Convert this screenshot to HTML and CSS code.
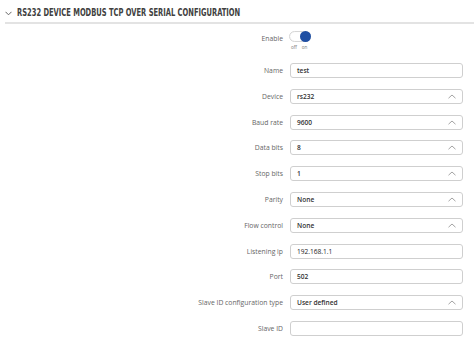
FILE: index.html
```html
<!DOCTYPE html>
<html>
<head>
<meta charset="utf-8">
<link rel="stylesheet" href="styles.css">
</head>
<body>
<div class="section">
  <div class="section-head">
    <svg class="chev" width="7" height="5" viewBox="0 0 7 5"><polyline points="0.5,0.8 3.5,3.8 6.5,0.8" fill="none" stroke="#666" stroke-width="1"/></svg>
    <span class="title">RS232 DEVICE MODBUS TCP OVER SERIAL CONFIGURATION</span>
  </div>
  <div class="form">
    <div class="row row-toggle">
      <label class="lbl">Enable</label>
      <div class="toggle-wrap">
        <div class="toggle"><span class="knob"></span></div>
        <div class="toggle-txt"><span>off</span><span>on</span></div>
      </div>
    </div>
    <div class="row"><label class="lbl">Name</label><div class="field">test</div></div>
    <div class="row"><label class="lbl">Device</label><div class="field select">rs232<svg class="caret" width="8" height="5" viewBox="0 0 8 5"><polyline points="0.5,4.2 4,1 7.5,4.2" fill="none" stroke="#999" stroke-width="0.9"/></svg></div></div>
    <div class="row"><label class="lbl">Baud rate</label><div class="field select">9600<svg class="caret" width="8" height="5" viewBox="0 0 8 5"><polyline points="0.5,4.2 4,1 7.5,4.2" fill="none" stroke="#999" stroke-width="0.9"/></svg></div></div>
    <div class="row"><label class="lbl">Data bits</label><div class="field select">8<svg class="caret" width="8" height="5" viewBox="0 0 8 5"><polyline points="0.5,4.2 4,1 7.5,4.2" fill="none" stroke="#999" stroke-width="0.9"/></svg></div></div>
    <div class="row"><label class="lbl">Stop bits</label><div class="field select">1<svg class="caret" width="8" height="5" viewBox="0 0 8 5"><polyline points="0.5,4.2 4,1 7.5,4.2" fill="none" stroke="#999" stroke-width="0.9"/></svg></div></div>
    <div class="row"><label class="lbl">Parity</label><div class="field select">None<svg class="caret" width="8" height="5" viewBox="0 0 8 5"><polyline points="0.5,4.2 4,1 7.5,4.2" fill="none" stroke="#999" stroke-width="0.9"/></svg></div></div>
    <div class="row"><label class="lbl">Flow control</label><div class="field select">None<svg class="caret" width="8" height="5" viewBox="0 0 8 5"><polyline points="0.5,4.2 4,1 7.5,4.2" fill="none" stroke="#999" stroke-width="0.9"/></svg></div></div>
    <div class="row"><label class="lbl">Listening ip</label><div class="field plain">192.168.1.1</div></div>
    <div class="row"><label class="lbl">Port</label><div class="field">502</div></div>
    <div class="row"><label class="lbl">Slave ID configuration type</label><div class="field select">User defined<svg class="caret" width="8" height="5" viewBox="0 0 8 5"><polyline points="0.5,4.2 4,1 7.5,4.2" fill="none" stroke="#999" stroke-width="0.9"/></svg></div></div>
    <div class="row"><label class="lbl">Slave ID</label><div class="field"></div></div>
  </div>
</div>
</body>
</html>
```
FILE: styles.css
```css
html, body {
  margin: 0;
  padding: 0;
  background: #fff;
}
body {
  width: 474px;
  height: 345px;
  overflow: hidden;
  font-family: "Open Sans", "Liberation Sans", sans-serif;
}
.section-head {
  display: flex;
  align-items: center;
  height: 20px;
  margin-top: 2px;
  margin-left: 5px;
  border-bottom: 2px solid #e3e3e3;
}
.chev {
  display: block;
  margin-right: 5px;
  margin-top: 2px;
}
.title {
  font-family: "Liberation Sans Narrow", "DejaVu Sans", sans-serif;
  font-stretch: condensed;
  font-weight: 700;
  font-size: 11px;
  color: #404040;
  display: inline-block;
  transform-origin: left center;
  transform: scaleX(0.68);
  white-space: nowrap;
}
.form {
  display: flex;
  flex-direction: column;
  padding-top: 7px;
}
.row {
  display: grid;
  grid-template-columns: 283px 173px;
  column-gap: 7px;
  align-items: center;
  height: 15px;
  margin-bottom: 10.8px;
}
.row-toggle {
  height: 20px;
  align-items: start;
  margin-bottom: 12px;
}
.lbl {
  text-align: right;
  font-size: 6.8px;
  color: #666;
  white-space: nowrap;
}
.row-toggle .lbl {
  margin-top: 3px;
}
.toggle-wrap {
  display: flex;
  flex-direction: column;
  margin-left: -1px;
}
.toggle {
  position: relative;
  width: 20px;
  height: 9px;
  border: 1px solid #d6d6d6;
  border-radius: 6px;
  background: #fff;
  box-shadow: inset 0 0 1px rgba(0,0,0,0.1);
}
.knob {
  position: absolute;
  right: -1px;
  top: -1px;
  width: 11px;
  height: 11px;
  border-radius: 50%;
  background: #1f4fa3;
}
.toggle-txt {
  display: flex;
  gap: 5px;
  font-size: 4.6px;
  color: #777;
  margin-top: 2px;
  padding-left: 2px;
}
.field {
  position: relative;
  box-sizing: border-box;
  height: 15px;
  border: 1px solid #cfcfcf;
  border-radius: 3px;
  padding-left: 6px;
  font-size: 6.6px;
  font-weight: 600;
  color: #333;
  display: flex;
  align-items: center;
  background: #fff;
}
.field.plain {
  font-weight: 400;
  color: #222;
}
.caret {
  position: absolute;
  right: 6px;
  top: 4px;
}
```
